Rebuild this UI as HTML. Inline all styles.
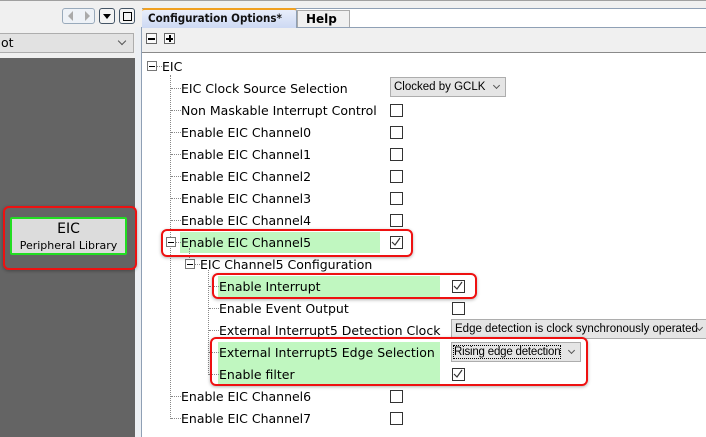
<!DOCTYPE html>
<html><head><meta charset="utf-8"><style>
*{margin:0;padding:0;box-sizing:border-box}
body{width:706px;height:437px;overflow:hidden;background:#f0f0f0;position:relative;font-family:"DejaVu Sans","Liberation Sans",sans-serif;}
.a{position:absolute}
.t{position:absolute;font-size:12.5px;color:#000;white-space:nowrap;line-height:16px}
.cb{position:absolute;width:13px;height:13px;border:1.5px solid #333;background:#fff}
.hd{position:absolute;border-top:1px dotted #888;width:10px;height:0}
.vd{position:absolute;border-left:1px dotted #888;width:0}
.ex{position:absolute;width:10px;height:10px;border:1px solid #777;background:#fff}
.ex:after{content:"";position:absolute;left:1px;top:3.5px;width:6px;height:1px;background:#000}
.g{position:absolute;background:#c0f7c0}
.r{position:absolute;border:2px solid #ee1111;border-radius:6px;box-shadow:0 1px 3px rgba(0,0,0,.3)}
.dd{position:absolute;height:20px;background:#e5e5e5;border:1px solid #adadad;font-family:"Liberation Sans",sans-serif;font-size:11.5px;line-height:18px;padding-left:3px;white-space:nowrap;overflow:hidden}
.dd i{position:absolute;right:6px;top:5px;width:5px;height:5px;border-right:1px solid #555;border-bottom:1px solid #555;transform:rotate(45deg)}
</style></head><body>
<div class="a" style="left:0;top:0;width:706px;height:1px;background:#a0a0a0"></div>
<div class="a" style="left:62px;top:8px;width:33px;height:16px;border:1px solid #9ab;border-radius:3px;background:#eef2f7"></div>
<div class="a" style="left:68px;top:11px;width:0;height:0;border-right:5px solid #aaa;border-top:5px solid transparent;border-bottom:5px solid transparent"></div>
<div class="a" style="left:85px;top:11px;width:0;height:0;border-left:5px solid #aaa;border-top:5px solid transparent;border-bottom:5px solid transparent"></div>
<div class="a" style="left:99px;top:8px;width:16px;height:16px;border:1px solid #456;border-radius:3px;background:#f4f4f4"></div>
<div class="a" style="left:103px;top:14px;width:0;height:0;border-top:5px solid #000;border-left:4px solid transparent;border-right:4px solid transparent"></div>
<div class="a" style="left:119px;top:8px;width:16px;height:16px;border:1px solid #456;border-radius:3px;background:#f4f4f4"></div>
<div class="a" style="left:123px;top:12px;width:9px;height:9px;border:1.5px solid #000"></div>
<div class="a" style="left:-2px;top:33px;width:136px;height:20px;border:1px solid #adadad;background:#e2e2e2;font-size:12.5px;line-height:18px;padding-left:2px">ot</div>
<div class="a" style="left:119px;top:38px;width:6px;height:6px;border-right:1px solid #555;border-bottom:1px solid #555;transform:rotate(45deg)"></div>
<div class="a" style="left:0;top:58px;width:135px;height:379px;background:#646464"></div>
<div class="a" style="left:135px;top:27px;width:6px;height:410px;background:#eceff3"></div>
<div class="a" style="left:141px;top:27px;width:1px;height:410px;background:#8fa0b5"></div>
<div class="a" style="left:10px;top:217px;width:117px;height:38px;background:#dcdcdc;border:2px solid #22dd22;border-radius:2px;text-align:center">
<div style="font-size:14px;line-height:18px;margin-top:1px">EIC</div>
<div style="font-size:11px;line-height:16px">Peripheral Library</div></div>
<div class="r" style="left:3px;top:206px;width:134px;height:64px"></div>
<div class="a" style="left:142px;top:8px;width:564px;height:1px;background:#8fa0b5"></div>
<div class="a" style="left:142px;top:9px;width:564px;height:18px;background:#fff"></div>
<div class="a" style="left:142px;top:27px;width:564px;height:1px;background:#8fa0b5"></div>
<div class="a" style="left:142px;top:8px;width:155px;height:20px;background:linear-gradient(#e8eefb,#cdd9f3);border-top:2px solid #f0a020;border-right:1px solid #8fa0b5;border-radius:3px 3px 0 0;font-weight:bold;font-size:11.5px;line-height:16px;padding-left:6px;color:#111;white-space:nowrap;font-family:'DejaVu Sans Condensed','DejaVu Sans',sans-serif">Configuration Options*</div>
<div class="a" style="left:297px;top:10px;width:53px;height:17px;background:#f0f0f0;border:1px solid #aaa;border-bottom:none;font-weight:bold;font-size:12px;line-height:16px;padding-left:8px">Help</div>
<div class="a" style="left:146px;top:33px;width:11px;height:11px;border:1px solid #666;background:#fafafa"></div>
<div class="a" style="left:148px;top:38px;width:7px;height:2px;background:#000"></div>
<div class="a" style="left:164px;top:33px;width:11px;height:11px;border:1px solid #666;background:#fafafa"></div>
<div class="a" style="left:166px;top:38px;width:7px;height:2px;background:#000"></div>
<div class="a" style="left:168.5px;top:35px;width:2px;height:7px;background:#000"></div>
<div class="a" style="left:142px;top:52px;width:564px;height:1px;background:#8a8a8a"></div>
<div class="a" style="left:142px;top:53px;width:564px;height:384px;background:#fff"></div>
<div class="g" style="left:180px;top:232px;width:200px;height:21px"></div>
<div class="g" style="left:218px;top:276px;width:222px;height:21px"></div>
<div class="g" style="left:218px;top:342px;width:222px;height:43px"></div>
<div class="vd" style="left:170px;top:75px;height:344px"></div>
<div class="vd" style="left:189px;top:248px;height:12px"></div>
<div class="vd" style="left:208px;top:270px;height:105px"></div>
<div class="hd" style="left:157px;top:66px;width:5px"></div>
<div class="hd" style="left:171px;top:88px"></div><div class="hd" style="left:171px;top:110px"></div>
<div class="hd" style="left:171px;top:132px"></div><div class="hd" style="left:171px;top:154px"></div>
<div class="hd" style="left:171px;top:176px"></div><div class="hd" style="left:171px;top:198px"></div>
<div class="hd" style="left:171px;top:220px"></div><div class="hd" style="left:176px;top:242px;width:5px"></div>
<div class="hd" style="left:195px;top:264px;width:5px"></div>
<div class="hd" style="left:209px;top:286px"></div><div class="hd" style="left:209px;top:308px"></div>
<div class="hd" style="left:209px;top:330px"></div><div class="hd" style="left:209px;top:352px"></div>
<div class="hd" style="left:209px;top:374px"></div>
<div class="hd" style="left:171px;top:396px"></div><div class="hd" style="left:171px;top:418px"></div>
<div class="ex" style="left:147px;top:61px"></div>
<div class="ex" style="left:166px;top:237px"></div>
<div class="ex" style="left:185px;top:259px"></div>
<div class="t" style="left:162px;top:59px">EIC</div>
<div class="t" style="left:181px;top:81px">EIC Clock Source Selection</div>
<div class="t" style="left:181px;top:103px">Non Maskable Interrupt Control</div>
<div class="t" style="left:181px;top:125px">Enable EIC Channel0</div>
<div class="t" style="left:181px;top:147px">Enable EIC Channel1</div>
<div class="t" style="left:181px;top:169px">Enable EIC Channel2</div>
<div class="t" style="left:181px;top:191px">Enable EIC Channel3</div>
<div class="t" style="left:181px;top:213px">Enable EIC Channel4</div>
<div class="t" style="left:181px;top:235px">Enable EIC Channel5</div>
<div class="t" style="left:200px;top:257px">EIC Channel5 Configuration</div>
<div class="t" style="left:219px;top:279px">Enable Interrupt</div>
<div class="t" style="left:219px;top:301px">Enable Event Output</div>
<div class="t" style="left:219px;top:323px">External Interrupt5 Detection Clock</div>
<div class="t" style="left:219px;top:345px">External Interrupt5 Edge Selection</div>
<div class="t" style="left:219px;top:367px">Enable filter</div>
<div class="t" style="left:181px;top:389px">Enable EIC Channel6</div>
<div class="t" style="left:181px;top:411px">Enable EIC Channel7</div>
<div class="dd" style="left:390px;top:77px;width:116px">Clocked by GCLK<i></i></div>
<div class="cb" style="left:390px;top:104px"></div>
<div class="cb" style="left:390px;top:126px"></div>
<div class="cb" style="left:390px;top:148px"></div>
<div class="cb" style="left:390px;top:170px"></div>
<div class="cb" style="left:390px;top:192px"></div>
<div class="cb" style="left:390px;top:214px"></div>
<div class="cb" style="left:390px;top:236px"><svg width="10" height="10" style="position:absolute;left:0;top:0"><path d="M1 5 L4 8 L9 1" stroke="#333" stroke-width="1.2" fill="none"/></svg></div>
<div class="cb" style="left:452px;top:280px"><svg width="10" height="10" style="position:absolute;left:0;top:0"><path d="M1 5 L4 8 L9 1" stroke="#333" stroke-width="1.2" fill="none"/></svg></div>
<div class="cb" style="left:452px;top:302px"></div>
<div class="dd" style="left:451px;top:319px;width:260px">Edge detection is clock synchronously operated<i style="right:8px"></i></div>
<div class="dd" style="left:451px;top:342px;width:130px;padding-left:2px"><span style="outline:1px dotted #000;letter-spacing:-0.2px">Rising edge detection</span><i></i></div>
<div class="cb" style="left:452px;top:368px"><svg width="10" height="10" style="position:absolute;left:0;top:0"><path d="M1 5 L4 8 L9 1" stroke="#333" stroke-width="1.2" fill="none"/></svg></div>
<div class="cb" style="left:390px;top:390px"></div>
<div class="cb" style="left:390px;top:412px"></div>
<div class="r" style="left:161px;top:229px;width:252px;height:28px"></div>
<div class="r" style="left:212px;top:273px;width:265px;height:26px"></div>
<div class="r" style="left:210px;top:337px;width:378px;height:49px"></div>
</body></html>
